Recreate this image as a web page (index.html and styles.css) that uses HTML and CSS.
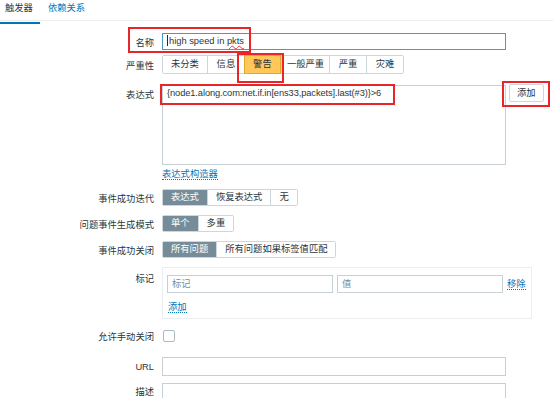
FILE: index.html
```html
<!DOCTYPE html>
<html>
<head>
	<meta charset="utf-8">
	<title>触发器</title>
	<link rel="stylesheet" href="styles.css">
</head>
<body>
<div class="tabs">
	<span class="tab active">触发器</span>
	<span class="tab">依赖关系</span>
</div>

<div class="form">
	<div class="row r-name">
		<label class="lbl">名称</label>
		<div class="field">
			<div class="input focus"><span class="caret"></span>high speed in <span class="typo">pkts</span></div>
		</div>
	</div>

	<div class="row r-sev">
		<label class="lbl">严重性</label>
		<div class="field">
			<div class="seg">
				<span class="btn">未分类</span>
				<span class="btn">信息</span>
				<span class="btn warn">警告</span>
				<span class="btn narrow">一般严重</span>
				<span class="btn">严重</span>
				<span class="btn">灾难</span>
			</div>
		</div>
	</div>

	<div class="row r-expr">
		<label class="lbl">表达式</label>
		<div class="field expr-field">
			<div class="textarea">{node1.along.com:net.if.in[ens33,packets].last(#3)}&gt;6</div>
			<span class="btn-add">添加</span>
		</div>
	</div>

	<div class="row r-link">
		<span class="lbl"></span>
		<div class="field"><a class="link" href="javascript:;">表达式构造器</a></div>
	</div>

	<div class="row">
		<label class="lbl">事件成功迭代</label>
		<div class="field">
			<div class="seg">
				<span class="btn on">表达式</span>
				<span class="btn">恢复表达式</span>
				<span class="btn">无</span>
			</div>
		</div>
	</div>

	<div class="row">
		<label class="lbl">问题事件生成模式</label>
		<div class="field">
			<div class="seg">
				<span class="btn on">单个</span>
				<span class="btn">多重</span>
			</div>
		</div>
	</div>

	<div class="row">
		<label class="lbl">事件成功关闭</label>
		<div class="field">
			<div class="seg">
				<span class="btn on">所有问题</span>
				<span class="btn">所有问题如果标签值匹配</span>
			</div>
		</div>
	</div>

	<div class="row r-tags">
		<label class="lbl lbl-top">标记</label>
		<div class="field">
			<div class="tagbox">
				<div class="tagline">
					<div class="input small ph">标记</div>
					<div class="input small ph">值</div>
					<a class="link" href="javascript:;">移除</a>
				</div>
				<a class="link" href="javascript:;">添加</a>
			</div>
		</div>
	</div>

	<div class="row r-check">
		<label class="lbl">允许手动关闭</label>
		<div class="field"><span class="checkbox"></span></div>
	</div>

	<div class="row r-url">
		<label class="lbl">URL</label>
		<div class="field"><div class="input"></div></div>
	</div>

	<div class="row">
		<label class="lbl lbl-top lbl-desc">描述</label>
		<div class="field"><div class="input tall"></div></div>
	</div>
</div>

<!-- 标注红框 -->
<div class="mark m-name"></div>
<div class="mark m-warn"></div>
<div class="mark m-expr"></div>
<div class="mark m-add"></div>
</body>
</html>
```

FILE: styles.css
```css
*{margin: 0; padding: 0; box-sizing: border-box;}
body{
	position: relative;
	background: #fff;
	color: #2a363c;
	font-family: "Liberation Sans", "Noto Sans CJK SC", sans-serif;
	font-size: 9.3px;
	width: 553px; height: 398px;
	overflow: hidden;
}
.tabs{
	height: 21px;
	border-bottom: 1px solid #ebeef0;
	display: flex;
	padding-left: 5px;
	gap: 15px;
}
.tab{ line-height: 17px; color: #0275b8; }
.tab.active{ color: #2a363c; position: relative; }
.tab.active::after{
	content: ""; position: absolute;
	left: -5px; right: -7px; bottom: -4px;
	height: 2px; background: #0275b8;
}

.form{ padding-top: 12px; }
.row{ display: flex; align-items: center; margin-bottom: 9px; }
.lbl{
	width: 162px; flex: none;
	text-align: right;
	padding-right: 8px;
}
.lbl-top{ align-self: flex-start; padding-top: 4px; }
.lbl-desc{ padding-top: 1px; }
.field{ display: flex; align-items: center; }

.input{
	width: 344px; height: 19px;
	border: 1px solid #c6d0d5;
	background: #fff;
	padding: 0 4px;
	line-height: 17px;
	white-space: nowrap;
}
.input.focus{ border-color: #4c98c6; height: 17px; line-height: 15px; }
.input.tall{ height: 22px; }
.caret{ display: inline-block; width: 1px; height: 11px; background: #1f2c33; vertical-align: -2px; margin-right: 1px; }
.typo{ text-decoration: underline wavy #e33; text-decoration-thickness: 1px; }
.r-name{ margin-bottom: 5px; }

.seg{ display: flex; border: 1px solid #cdd6da; border-radius: 2px; }
.btn{
	height: 15px; line-height: 15px;
	padding: 0 8px;
	border-left: 1px solid #cdd6da;
	background: #fff;
	white-space: nowrap;
}
.btn:first-child{ border-left: none; }
.btn.on{ background: #768d99; color: #fff; }
.r-sev .btn{ height: 17px; line-height: 17px; min-width: 37px; text-align: center; }
.r-sev .btn.narrow{ padding: 0 5px; }
.r-sev .btn.warn{ background: #ffc859; border: 1px solid #e3a82e; margin: -1px 0; height: 19px; line-height: 17px; }
.r-sev{ margin-bottom: 11px; }

.r-expr{ align-items: flex-start; margin-bottom: 4px; }
.r-expr .lbl{ padding-top: 2px; }
.expr-field{ align-items: flex-start; }
.textarea{
	width: 344px; height: 80px;
	border: 1px solid #c6d0d5;
	padding: 2px 4px;
	white-space: nowrap;
	letter-spacing: -0.1px;
}
.btn-add{
	margin-left: 3px; margin-top: -1px;
	height: 18px; line-height: 16px;
	padding: 0 7px;
	border: 1px solid #cdd6da; border-radius: 2px;
}
.link{ color: #0275b8; text-decoration: none; border-bottom: 1px dotted #0275b8; line-height: 10px; }
.r-link{ margin-bottom: 9px; }

.r-tags{ align-items: flex-start; margin-bottom: 7px; }
.tagbox{
	width: 370px;
	border: 1px solid #ebeef0;
	padding: 7px 4px 6px;
}
.tagline{ display: flex; align-items: center; gap: 4px; margin-bottom: 9px; }
.input.small{ width: 166px; height: 18px; line-height: 16px; color: #768d99; }
.tagbox > .link{ margin-left: 1px; }

.checkbox{
	display: block; width: 12px; height: 12px;
	border: 1px solid #acbbc2; border-radius: 2px;
	margin-left: 1px;
}
.r-check{ height: 19px; margin-bottom: 12px; }
.r-url{ margin-bottom: 7px; }

.mark{ position: absolute; border: 2px solid #e8262a; }
.m-name{ left: 128px; top: 27px; width: 123px; height: 26px; }
.m-warn{ left: 237px; top: 53px; width: 47px; height: 30px; }
.m-expr{ left: 160px; top: 84px; width: 235px; height: 21px; }
.m-add{ left: 502px; top: 81px; width: 48px; height: 26px; }
```
